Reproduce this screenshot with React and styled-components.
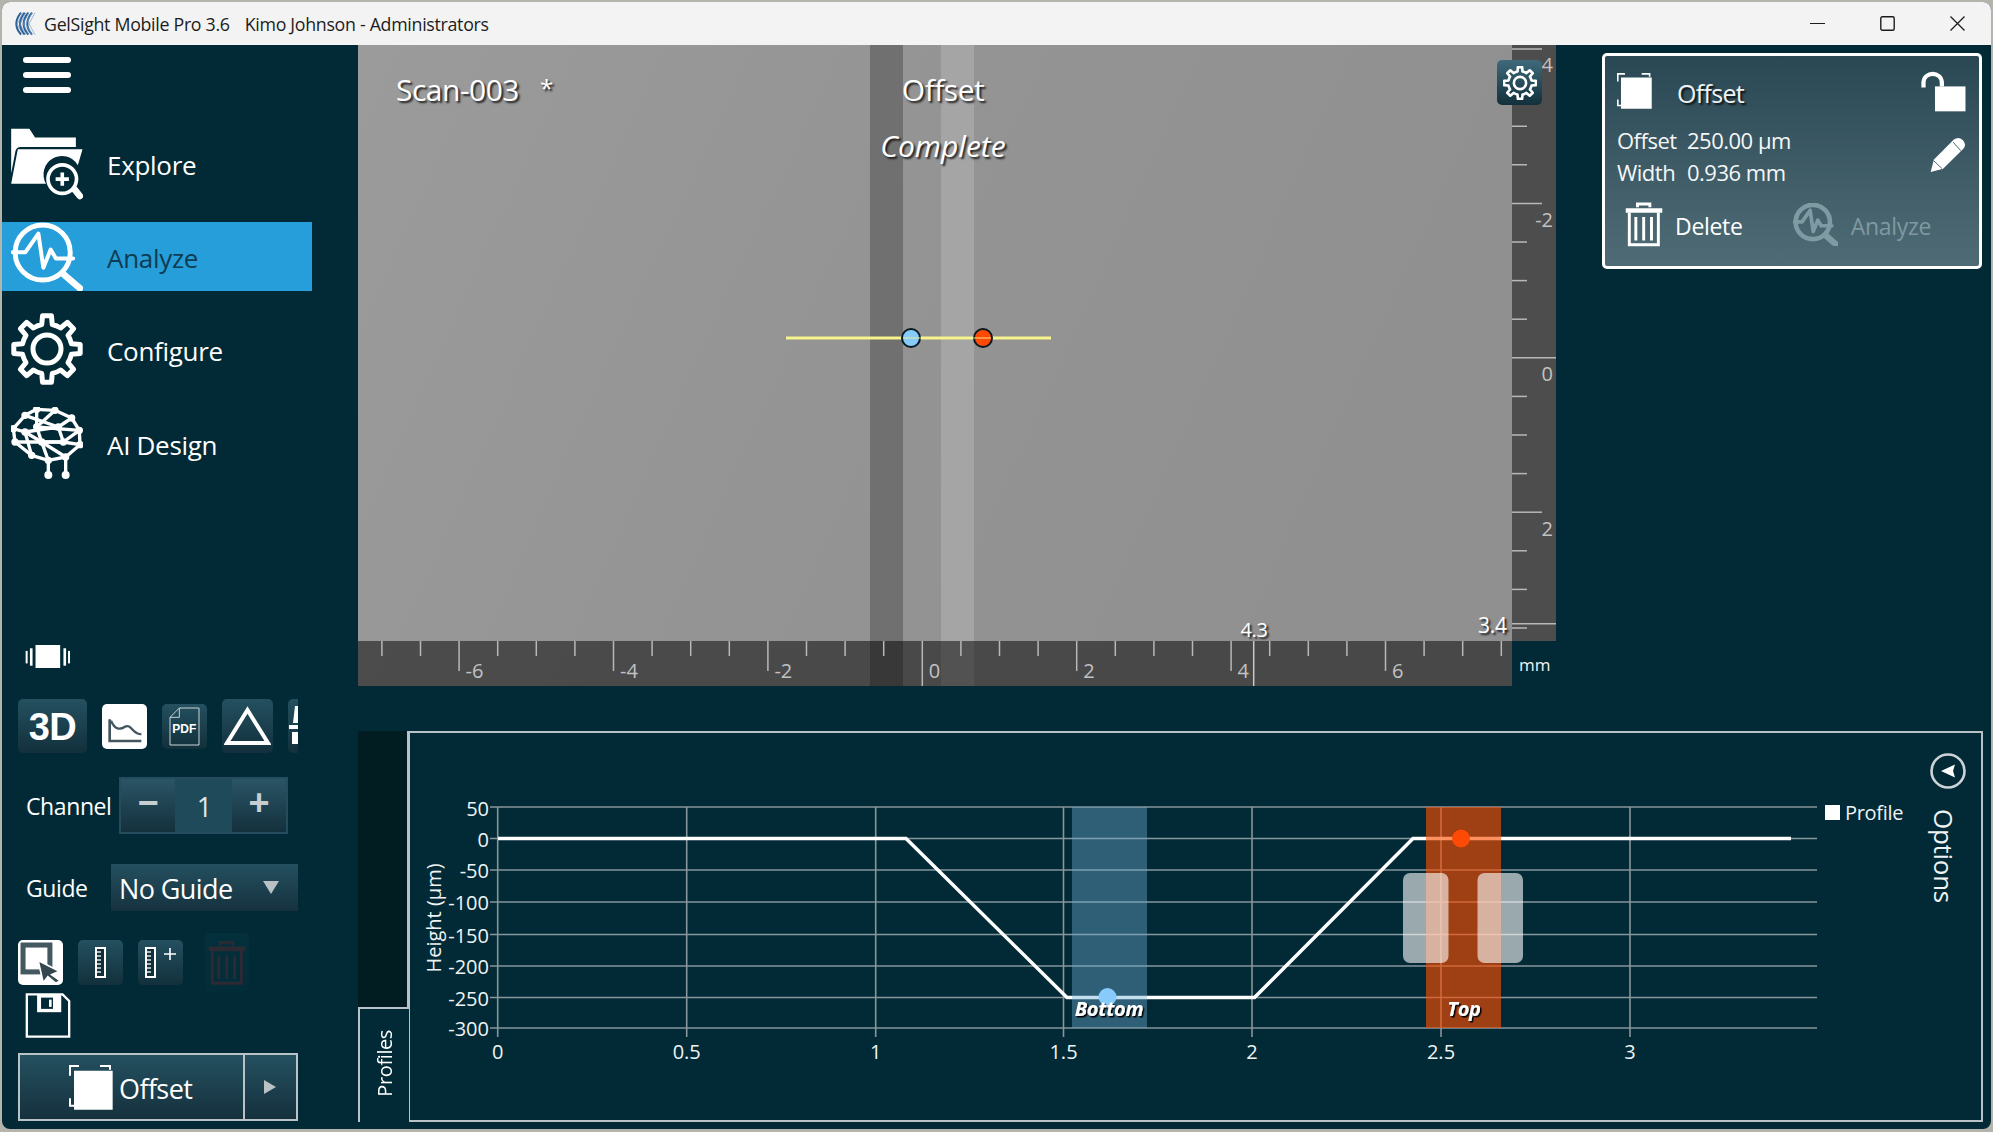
import React from 'react';
import styled, { createGlobalStyle } from 'styled-components';

const FONT = '"Open Sans", "Noto Sans", "Liberation Sans", sans-serif';
const BG = '#022a36';
const LINE = '#b9c3c7';

const Global = createGlobalStyle`
  html, body { margin: 0; padding: 0; width: 1993px; height: 1132px; overflow: hidden; background: #b4b4ac; }
  body { font-family: ${FONT}; }
  * { box-sizing: border-box; }
`;

const Win = styled.div`
  margin: 2px 2px 0 2px; width: 1989px; height: 1127px; background: ${BG};
  border-radius: 8px; overflow: hidden; display: flex; flex-direction: column;
`;
const TitleBar = styled.header`
  height: 43px; flex: none; background: #f3f3f3; display: flex; align-items: center;
  padding-left: 11px; color: #1c1c1c; font-size: 17.8px; letter-spacing: -0.3px;
  svg { flex: none; }
`;
const TitleText = styled.span`margin-left: ${p => p.$ml}px; white-space: nowrap;`;
const WinButtons = styled.div`margin-left: auto; display: flex; align-items: center; padding-right: 26px; gap: 55px;`;
const Body = styled.div`flex: 1; display: flex; min-height: 0;`;

/* sidebar */
const Sidebar = styled.aside`width: 356px; flex: none; display: flex; flex-direction: column; padding-top: 12px;`;
const Burger = styled.div`
  margin-left: 21px; width: 48px; height: 36px; display: flex; flex-direction: column; justify-content: space-between;
  span { display: block; height: 6px; border-radius: 3px; background: #fff; }
`;
const Nav = styled.nav`margin-top: 34px; display: flex; flex-direction: column; gap: 22px;`;
const NavLabel = styled.span`padding-top: 3px;`;
const NavItem = styled.div`
  width: 310px; height: ${p => p.$h}px; display: flex; align-items: center; padding-left: 9px; gap: 24px;
  background: ${p => (p.$active ? '#269ed9' : 'transparent')};
  color: ${p => (p.$active ? '#0f3c52' : '#fff')};
  font-size: 26px; letter-spacing: -0.3px;
  svg { flex: none; }
`;
const Lower = styled.div`margin-top: 166px; padding-left: 16px; display: flex; flex-direction: column;`;
const Vibrate = styled.div`margin-left: 7px; height: 23px; display: flex;`;
const Toolbar = styled.div`margin-top: 31px; width: 280px; height: 54px; overflow: hidden; display: flex; align-items: center; gap: 15px;`;
const IconButton = styled.div`
  flex: none; width: ${p => p.$w || 45}px; height: ${p => p.$hh || 45}px; border-radius: 5px;
  margin-left: ${p => p.$ml || 0}px;
  display: flex; align-items: center; justify-content: ${p => (p.$start ? 'flex-start' : 'center')};
  background: ${p => p.$flat ? 'linear-gradient(#03303c,#022c38)' : p.$white ? '#fff' : 'linear-gradient(#24505f,#12303c)'};
  svg { display: block; }
`;
const ThreeD = styled.span`color: #fff; font: 700 38px "Liberation Sans", sans-serif; letter-spacing: -0.5px; padding-top: 2px;`;
const FieldRow = styled.div`margin-top: ${p => p.$mt}px; display: flex; align-items: center; height: ${p => p.$h}px;`;
const FieldLabel = styled.label`width: ${p => p.$w}px; margin-left: 8px; padding-top: 3px; color: #fff; font-size: 23px; letter-spacing: -0.4px; flex: none;`;
const Stepper = styled.div`margin-top: 1px; width: 169px; height: 57px; border: 2px solid #244c5c; display: flex; background: #1f4a5a;`;
const StepBtn = styled.div`
  width: 54px; background: linear-gradient(#2a5565,#14303d); color: #c6ced1; font: 700 36px "Liberation Sans", sans-serif;
  display: flex; align-items: center; justify-content: center; padding-bottom: 4px;
`;
const StepValue = styled.div`flex: 1; color: #dfe6e8; font-size: 27px; display: flex; align-items: center; justify-content: center; padding: 2px 0 0 2px;`;
const Select = styled.div`
  width: 187px; height: 47px; margin-top: 1px; background: linear-gradient(#24505f,#16323f); color: #fff; font-size: 27px; letter-spacing: -0.6px;
  display: flex; align-items: center; padding-left: 8px;
`;
const SelectText = styled.span`padding-top: 2px;`;
const Caret = styled.i`
  margin-left: auto; margin-right: 19px; margin-top: 1px; width: 0; height: 0;
  border-left: 8px solid transparent; border-right: 8px solid transparent; border-top: 13px solid #b9c1c5;
`;
const ToolRow = styled.div`margin-top: 23px; height: 59px; display: flex; align-items: center; gap: 15px;`;
const Save = styled.div`margin: 1px 0 0 7px; height: 45px;`;
const OffsetButton = styled.div`
  margin-top: 15px; width: 280px; height: 68px; border: 2px solid ${LINE}; display: flex;
  background: linear-gradient(#24505f,#15303d); color: #fff; font-size: 27px; letter-spacing: -0.6px;
`;
const OffsetMain = styled.div`width: 225px; display: flex; align-items: center; padding-left: 49px; gap: 6px; border-right: 2px solid ${LINE};`;
const OffsetPlay = styled.div`flex: 1; display: flex; align-items: center; justify-content: center; padding-right: 2px;`;
const Play = styled.i`width: 0; height: 0; border-top: 7px solid transparent; border-bottom: 7px solid transparent; border-left: 12px solid #b9c1c5;`;

/* main */
const Main = styled.main`flex: 1; display: flex; flex-direction: column; min-width: 0;`;
const TopRow = styled.div`display: flex; height: 641px; flex: none;`;
const Stage = styled.section`position: relative; width: 1198px; height: 641px; flex: none; svg { display: block; }`;
const Over = styled.div`
  position: absolute; left: ${p => p.$x}px; top: ${p => p.$y}px; color: #fff; line-height: 1; white-space: nowrap;
  font-size: ${p => p.$s || 30}px; letter-spacing: ${p => p.$ls ?? -0.5}px; font-style: ${p => (p.$it ? 'italic' : 'normal')};
  text-shadow: 2px 2px 2px rgba(0,0,0,.8); transform: ${p => (p.$c ? 'translateX(-50%)' : 'none')};
`;
const GearBtn = styled.div`
  position: absolute; left: 1139px; top: 15px; width: 45px; height: 45px; border-radius: 5px;
  background: linear-gradient(#3f6a7c,#12303c); display: flex; align-items: center; justify-content: center;
`;
const Panel = styled.section`
  margin: 8px 0 0 46px; width: 380px; height: 216px; border: 3px solid #fff; border-radius: 5px;
  background: linear-gradient(#2a4854,#4f6c76); padding: 15px 13px 0 12px; color: #fff; display: flex; flex-direction: column;
`;
const PanelHead = styled.div`display: flex; align-items: center; height: 40px;`;
const PanelTitle = styled.span`margin-left: 25px; padding-top: 4px; font-size: 25px; letter-spacing: -0.7px; text-shadow: 2px 2px 2px rgba(0,0,0,.8); color: #eef2f3;`;
const PanelMid = styled.div`margin-top: 11px; display: flex; align-items: center; justify-content: space-between; height: 66px;`;
const Rows = styled.div`display: grid; grid-template-columns: 70px auto; font-size: 22px; line-height: 32px; letter-spacing: -0.5px; padding: 2px 0 0 1px; margin-left: -1px; color: #f4f7f7;`;
const Actions = styled.div`margin-top: 14px; display: flex; align-items: center; padding-left: 8px; height: 45px;`;
const Action = styled.span`padding-top: 2px; font-size: 23px; letter-spacing: -0.3px; font-weight: ${p => (p.$dim ? 400 : 500)}; color: ${p => (p.$dim ? '#7f99a1' : '#fff')}; margin-left: ${p => p.$ml}px;`;
const ActionIcon = styled.span`display: flex; margin-left: ${p => p.$ml}px;`;
const Push = styled.div`margin-left: auto; display: flex;`;

const ChartRow = styled.div`margin-top: 45px; height: 391px; display: flex; flex: none;`;
const Tabs = styled.div`width: 51px; flex: none; display: flex; flex-direction: column;`;
const TabSpace = styled.div`flex: 1; background: #011d22; border-right: 2px solid ${LINE};`;
const ProfilesTab = styled.div`
  height: 115px; border-left: 2px solid ${LINE}; border-top: 2px solid ${LINE}; color: #fff;
  display: flex; align-items: center; justify-content: center;
  span { writing-mode: vertical-rl; transform: rotate(180deg); font-size: 20px; letter-spacing: -0.4px; margin-bottom: 4px; }
`;
const ChartFrame = styled.div`
  width: 1574px; height: 391px; border: 2px solid ${LINE}; border-left-width: 1px; flex: none;
  svg { display: block; }
  text { font-family: ${FONT}; }
`;

/* icons */
const gear = (cx, cy, R, r, n) => {
  const w = (2 * Math.PI) / n;
  let d = '';
  for (let i = 0; i < n; i++) {
    const a = i * w - Math.PI / 2;
    const pts = [[r, a - w * 0.27], [R, a - w * 0.17], [R, a + w * 0.17], [r, a + w * 0.27]];
    pts.forEach(([q, t], k) => {
      const x = (cx + q * Math.cos(t)).toFixed(2);
      const y = (cy + q * Math.sin(t)).toFixed(2);
      d += i === 0 && k === 0 ? `M${x} ${y}` : k === 0 ? `A${r} ${r} 0 0 1 ${x} ${y}` : `L${x} ${y}`;
    });
  }
  return d + `A${r} ${r} 0 0 1 ${(cx + r * Math.cos(-Math.PI / 2 - w * 0.27)).toFixed(2)} ${(cy + r * Math.sin(-Math.PI / 2 - w * 0.27)).toFixed(2)}Z`;
};

const Logo = () => (
  <svg width="24" height="24" viewBox="40 30 72 72" fill="none">
    {[0, 1, 2, 3].map(i => <path key={i} d={`M${64 + i * 11} 32 Q${36 + i * 11} 66 ${64 + i * 11} 98`} stroke="#2f6296" strokeWidth="6" />)}
    {[0, 1, 2, 3, 4].map(i => <path key={'b' + i} d={`M${70 + i * 9} 32 L${52 + i * 9} 66 L${70 + i * 9} 98`} stroke="#6f9cc4" strokeWidth="2" />)}
  </svg>
);
const ExploreIcon = () => (
  <svg width="72" height="73" viewBox="33 380 216 220">
    <path fill="#fff" d="M33 385H88L105 412H228V440H62Q49 440 46 452L33 520Z" />
    <path fill="#fff" d="M53 447H248L234 495A55 55 0 0 0 138 551H33Z" />
    <circle cx="187" cy="537" r="43" fill={BG} stroke="#fff" strokeWidth="11" />
    <path d="M187 517V557M167 537H207" stroke="#fff" strokeWidth="11" />
    <path d="M224 568L240 588" stroke="#fff" strokeWidth="20" strokeLinecap="round" />
  </svg>
);
const AnalyzeIcon = ({ c = '#fff', size = 72, h = 69, k = 1 }) => (
  <svg width={size} height={h} viewBox="33 665 216 208" fill="none" stroke={c} strokeLinecap="round" strokeLinejoin="round">
    <circle cx="128" cy="757" r="83" strokeWidth={15 * k} />
    <path d="M38 756H76L115 700L130 803L152 748L168 775H220" strokeWidth={12 * k} />
    <path d="M190 822L240 865" strokeWidth={20 * k} />
  </svg>
);
const ConfigureIcon = () => (
  <svg width="72" height="72" viewBox="0 0 72 72" fill="none" stroke="#fff" strokeWidth="5" strokeLinejoin="round">
    <path d={gear(36, 36, 33.5, 25, 8)} />
    <circle cx="36" cy="36" r="14" />
  </svg>
);
const N = [[75,1250],[110,1232],[165,1235],[215,1258],[238,1295],[240,1338],[197,1375],[145,1385],[95,1370],[45,1330],[40,1290],[110,1285],[175,1285],[125,1330],[190,1330],[75,1300]];
const E = [[0,1],[1,2],[2,3],[3,4],[4,5],[5,6],[6,7],[7,8],[8,9],[9,10],[10,0],[1,11],[11,13],[13,7],[0,12],[2,11],[12,14],[3,12],[14,5],[4,14],[15,10],[15,12],[15,13],[13,14],[9,14],[11,4],[15,8],[13,6]];
const AiIcon = () => (
  <svg width="72" height="72" viewBox="33 1225 216 216" stroke="#fff" strokeWidth="10" fill="#fff">
    {E.map(([a, b], i) => <line key={i} x1={N[a][0]} y1={N[a][1]} x2={N[b][0]} y2={N[b][1]} />)}
    {N.map(([x, y], i) => <circle key={i} cx={x} cy={y} r="6" />)}
    <path d="M145 1385V1428M197 1375V1428" />
    <circle cx="145" cy="1429" r="7" /><circle cx="197" cy="1429" r="7" />
  </svg>
);
const SquareBrackets = ({ w, h }) => (
  <svg width={w} height={h} viewBox="207 1308 132 135" fill="none">
    <path fill="#fff" d="M222 1325H338V1442H222Z" />
    <path stroke="#fff" strokeWidth="6" d="M237 1311H210V1340M300 1311H330V1322M210 1408V1430H222" />
  </svg>
);
const Trash = ({ c = '#fff', w = 38, h = 45 }) => (
  <svg width={w} height={h} viewBox="434 604 116 138" fill="none" stroke={c}>
    <path strokeWidth="9" d="M472 620V610H510V620" />
    <path strokeWidth="14" d="M436 630H548" />
    <path strokeWidth="9" d="M447 636V735H536V636" />
    <path strokeWidth="9" d="M467 650V722M491 650V722M515 650V722" />
  </svg>
);
const Ruler = () => (
  <g>
    <rect x="0" y="0" width="9" height="29" fill="#12303c" stroke="#fff" strokeWidth="2" />
    <path d="M1 4H5M1 8H5M1 12H5M1 16H5M1 20H5M1 24H5" stroke="#dfe6e8" strokeWidth="1.5" />
  </g>
);

const hLines = [807, 838.5, 870, 902, 934.5, 966, 997.5, 1028];
const hLabels = ['50', '0', '-50', '-100', '-150', '-200', '-250', '-300'];
const vLines = [[497.7,'0'],[686.7,'0.5'],[875.7,'1'],[1063.5,'1.5'],[1252,'2'],[1441,'2.5'],[1630,'3']];

const bottomTicks = Array.from({ length: 30 }, (_, i) => i - 14);
const sideTicks = Array.from({ length: 16 }, (_, i) => i - 8);

const StageArt = () => (
  <svg width="1198" height="641" viewBox="358 45 1198 641">
    <defs>
      <linearGradient id="img" x1="0" y1="0" x2="1" y2="0.25">
        <stop offset="0" stopColor="#9b9b9b" />
        <stop offset="0.5" stopColor="#949494" />
        <stop offset="1" stopColor="#909090" />
      </linearGradient>
    </defs>
    <rect x="358" y="45" width="1154" height="641" fill="url(#img)" />
    <rect x="870" y="45" width="33" height="641" fill="#707070" />
    <rect x="941" y="45" width="33" height="641" fill="#a5a5a5" />
    <rect x="358" y="641" width="1154" height="45" fill="#000" opacity=".5" />
    <rect x="1512" y="45" width="44" height="596" fill="#4d4d4d" />
    {bottomTicks.map(k => {
      const x = 922.3 + k * 38.6;
      const major = k % 4 === 0;
      return <line key={k} x1={x} x2={x} y1="641" y2={k === 0 ? 686 : major ? 671 : 656} stroke="#b8b8b8" strokeWidth="1.5" />;
    })}
    {[-6, -4, -2, 0, 2, 4, 6].map(v => (
      <text key={v} x={922.3 + v * 77.2 + 6.5} y="678" fontFamily={FONT} fontSize="20" fill="#c2c2c2">{v}</text>
    ))}
    {sideTicks.map(k => {
      const y = 357.8 + k * 38.6;
      const major = k % 4 === 0;
      return <line key={k} y1={y} y2={y} x1="1512" x2={k === 0 ? 1556 : major ? 1542 : 1527} stroke="#b8b8b8" strokeWidth="1.5" />;
    })}
    <line x1="1512" x2="1556" y1="623.8" y2="623.8" stroke="#b8b8b8" strokeWidth="1.5" />
    <line x1="1253.7" x2="1253.7" y1="641" y2="686" stroke="#c8c8c8" strokeWidth="1.5" />
    {[[-4, 72], [-2, 227], [0, 381], [2, 536]].map(([v, y]) => (
      <text key={v} x="1553" y={y} textAnchor="end" fontFamily={FONT} fontSize="20" fill="#c2c2c2">{v}</text>
    ))}
    <text x="1519" y="671" fontFamily={FONT} fontSize="17" fill="#f0f4f5">mm</text>
    <line x1="786" x2="1051" y1="338" y2="338" stroke="#f6f48c" strokeWidth="3" />
    <circle cx="911" cy="338" r="9" fill="#87cbfb" stroke="#0b1a22" strokeWidth="2" />
    <circle cx="983" cy="338" r="9" fill="#ff4a05" stroke="#0b1a22" strokeWidth="2" />
    <line x1="903" x2="991" y1="338" y2="338" stroke="#f6f48c" strokeWidth="1.4" opacity=".6" />
  </svg>
);

const ChartArt = () => (
  <svg width="1571" height="387" viewBox="410 733 1571 387">
    <defs>
      <filter id="sh" x="-20%" y="-20%" width="140%" height="150%">
        <feDropShadow dx="1.5" dy="1.5" stdDeviation="0.6" floodColor="#000" floodOpacity="1" />
      </filter>
    </defs>
    {hLines.map(y => <line key={y} x1="490" x2="1817" y1={y} y2={y} stroke="#87969a" strokeWidth="1.6" />)}
    {vLines.map(([x]) => <line key={x} x1={x} x2={x} y1="807" y2="1037" stroke="#87969a" strokeWidth="1.6" />)}
    {hLabels.map((t, i) => <text key={t} x="489" y={hLines[i] + (i === 0 ? 9 : 8)} textAnchor="end" fontSize="20" fill="#eef3f4">{t}</text>)}
    {vLines.map(([x, t]) => <text key={t} x={x} y="1059" textAnchor="middle" fontSize="20" fill="#eef3f4">{t}</text>)}
    <text transform="translate(441 918) rotate(-90)" textAnchor="middle" fontSize="20" fill="#eef3f4">Height (μm)</text>
    <path d="M498 838.5H906L1067 997.5H1254.5L1413 838.5H1791" fill="none" stroke="#fff" strokeWidth="3.5" />
    <rect x="1072" y="807" width="75" height="221" fill="#70afd6" opacity=".4" />
    <rect x="1426" y="807" width="75" height="221" fill="#ff4e00" opacity=".62" />
    <circle cx="1107.5" cy="997" r="9" fill="#87cbfb" />
    <circle cx="1461" cy="838.5" r="9" fill="#ff4a05" />
    <rect x="1403" y="873" width="45.5" height="90" rx="7" fill="#fff" opacity=".6" />
    <rect x="1477.5" y="873" width="45.5" height="90" rx="7" fill="#fff" opacity=".6" />
    <text x="1109" y="1016" textAnchor="middle" fontSize="20" fontWeight="700" fontStyle="italic" fill="#fff" letterSpacing="-0.3" filter="url(#sh)">Bottom</text>
    <text x="1464" y="1016" textAnchor="middle" fontSize="20" fontWeight="700" fontStyle="italic" fill="#fff" letterSpacing="-0.3" filter="url(#sh)">Top</text>
    <rect x="1825" y="805" width="15" height="15" fill="#fff" />
    <text x="1845" y="820" fontSize="20" letterSpacing="-0.3" fill="#eef3f4">Profile</text>
    <circle cx="1948" cy="771" r="16.5" fill="none" stroke="#ccd4d7" strokeWidth="2.6" />
    <path d="M1941 771L1955 764.5L1953 771L1955 777.5Z" fill="#fff" />
    <text transform="translate(1934 856) rotate(90)" textAnchor="middle" fontSize="26" letterSpacing="-0.3" fill="#eef3f4">Options</text>
  </svg>
);

export default function App() {
  return (
    <>
      <Global />
      <Win>
        <TitleBar>
          <Logo />
          <TitleText $ml={7}>GelSight Mobile Pro 3.6</TitleText>
          <TitleText $ml={15}>Kimo Johnson - Administrators</TitleText>
          <WinButtons>
            <svg width="15" height="15" viewBox="0 0 15 15"><path d="M0 7.5H15" stroke="#1c1c1c" strokeWidth="1.2" /></svg>
            <svg width="15" height="15" viewBox="0 0 15 15"><rect x="0.8" y="0.8" width="13.4" height="13.4" rx="1.5" fill="none" stroke="#1c1c1c" strokeWidth="1.4" /></svg>
            <svg width="15" height="15" viewBox="0 0 15 15"><path d="M0.5 0.5L14.5 14.5M14.5 0.5L0.5 14.5" stroke="#1c1c1c" strokeWidth="1.3" /></svg>
          </WinButtons>
        </TitleBar>
        <Body>
          <Sidebar>
            <Burger><span /><span /><span /></Burger>
            <Nav>
              <NavItem $h={73}><ExploreIcon /><NavLabel>Explore</NavLabel></NavItem>
              <NavItem $h={69} $active><AnalyzeIcon /><NavLabel>Analyze</NavLabel></NavItem>
              <NavItem $h={72}><ConfigureIcon /><NavLabel>Configure</NavLabel></NavItem>
              <NavItem $h={72}><AiIcon /><NavLabel>AI Design</NavLabel></NavItem>
            </Nav>
            <Lower>
              <Vibrate>
                <svg width="46" height="23" viewBox="75 47 136 70" fill="#fff">
                  <rect x="105" y="47" width="75" height="70" />
                  <rect x="75" y="65" width="6" height="38" /><rect x="88" y="57" width="8" height="53" />
                  <rect x="190" y="57" width="8" height="53" /><rect x="204" y="65" width="6" height="38" />
                </svg>
              </Vibrate>
              <Toolbar>
                <IconButton $w={69} $hh={54}><ThreeD>3D</ThreeD></IconButton>
                <IconButton $white>
                  <svg width="45" height="45" viewBox="306 222 135 135" fill="none" stroke="#44565d">
                    <path strokeWidth="8" d="M329 268V333H424" />
                    <path strokeWidth="7" d="M333 272C345 300 360 300 375 290C395 280 398 316 424 312" />
                  </svg>
                </IconButton>
                <IconButton>
                  <svg width="45" height="45" viewBox="486 222 135 135" fill="none">
                    <path stroke="#c9d3d6" strokeWidth="3" d="M538 234H597V345H510V262ZM538 234V262H510" />
                    <text x="553" y="310" textAnchor="middle" fontFamily="Liberation Sans" fontWeight="700" fontSize="36" fill="#fff">PDF</text>
                  </svg>
                </IconButton>
                <IconButton $w={51} $hh={54}>
                  <svg width="47" height="40" viewBox="0 0 47 40" fill="none"><path d="M23.5 4L44 37H3Z" stroke="#fff" strokeWidth="4" /></svg>
                </IconButton>
                <IconButton $w={51} $hh={54} $start>
                  <svg width="10" height="40" viewBox="0 0 10 40" fill="#fff"><path d="M7 0H10V17H5ZM1 19H10V23H1ZM4 26H10V38H4Z" /></svg>
                </IconButton>
              </Toolbar>
              <FieldRow $mt={23} $h={57}>
                <FieldLabel $w={93}>Channel</FieldLabel>
                <Stepper><StepBtn>−</StepBtn><StepValue>1</StepValue><StepBtn>+</StepBtn></Stepper>
              </FieldRow>
              <FieldRow $mt={30} $h={47}>
                <FieldLabel $w={85}>Guide</FieldLabel>
                <Select><SelectText>No Guide</SelectText><Caret /></Select>
              </FieldRow>
              <ToolRow>
                <IconButton $white>
                  <svg width="45" height="45" viewBox="55 937 134 134" fill="none">
                    <rect x="70" y="952" width="80" height="80" stroke="#43585f" strokeWidth="15" />
                    <path d="M115 998L178 1030L155 1040L180 1058L168 1066L144 1046L130 1064Z" fill="#34474f" stroke="#fff" strokeWidth="5" />
                  </svg>
                </IconButton>
                <IconButton><svg width="45" height="45" viewBox="-18 -8 45 45"><Ruler /></svg></IconButton>
                <IconButton>
                  <svg width="45" height="45" viewBox="-8 -8 45 45"><Ruler /><path d="M18 6H30M24 0V12" stroke="#fff" strokeWidth="1.6" /></svg>
                </IconButton>
                <IconButton $flat $w={44} $hh={59} $ml={7}><Trash c="#2c2a32" w={38} h={46} /></IconButton>
              </ToolRow>
              <Save>
                <svg width="46" height="45" viewBox="75 1092 136 136" fill="none">
                  <path d="M79 1096H187L207 1116V1224H79Z" stroke="#fff" strokeWidth="7" />
                  <path d="M110 1096H183V1150H110Z" fill="#fff" />
                  <rect x="122" y="1106" width="36" height="34" fill={BG} />
                  <rect x="146" y="1112" width="8" height="22" fill="#fff" />
                </svg>
              </Save>
              <OffsetButton>
                <OffsetMain><SquareBrackets w={44} h={45} /><SelectText>Offset</SelectText></OffsetMain>
                <OffsetPlay><Play /></OffsetPlay>
              </OffsetButton>
            </Lower>
          </Sidebar>
          <Main>
            <TopRow>
              <Stage>
                <StageArt />
                <Over $x={38} $y={30}>Scan-003</Over>
                <Over $x={182} $y={31} $s={24}>*</Over>
                <Over $x={585} $y={30} $c>Offset</Over>
                <Over $x={585} $y={86} $c $it $ls={0}>Complete</Over>
                <Over $x={896} $y={575} $c $s={20} $ls={-0.3}>4.3</Over>
                <Over $x={1120} $y={570} $s={21} $ls={-0.3}>3.4</Over>
                <GearBtn>
                  <svg width="34" height="34" viewBox="0 0 72 72" fill="none" stroke="#fff" strokeWidth="5.5" strokeLinejoin="round">
                    <path d={gear(36, 36, 34, 25, 8)} /><circle cx="36" cy="36" r="13" />
                  </svg>
                </GearBtn>
              </Stage>
              <Panel>
                <PanelHead>
                  <SquareBrackets w={35} h={36} />
                  <PanelTitle>Offset</PanelTitle>
                  <Push>
                    <svg width="45" height="41" viewBox="1323 215 136 125" fill="none">
                      <path d="M1330 265V250C1332 215 1384 215 1386 250V262" stroke="#fff" strokeWidth="13" />
                      <rect x="1365" y="262" width="93" height="76" fill="#fff" />
                    </svg>
                  </Push>
                </PanelHead>
                <PanelMid>
                  <Rows>
                    <span>Offset</span><span>250.00 µm</span>
                    <span>Width</span><span>0.936 mm</span>
                  </Rows>
                  <svg width="36" height="36" viewBox="1350 434 110 110">
                    <path fill="#fff" d="M1352 541L1362 503L1423 442Q1436 431 1450 443Q1463 456 1452 470L1390 531Z" />
                    <path stroke="#4a6671" strokeWidth="3" fill="none" d="M1421 450L1444 476M1362 507L1386 530" />
                  </svg>
                </PanelMid>
                <Actions>
                  <Trash />
                  <Action $ml={12}>Delete</Action>
                  <ActionIcon $ml={50}><AnalyzeIcon c="#7f9aa2" size={45} h={43} k={1.5} /></ActionIcon>
                  <Action $dim $ml={13}>Analyze</Action>
                </Actions>
              </Panel>
            </TopRow>
            <ChartRow>
              <Tabs>
                <TabSpace />
                <ProfilesTab><span>Profiles</span></ProfilesTab>
              </Tabs>
              <ChartFrame><ChartArt /></ChartFrame>
            </ChartRow>
          </Main>
        </Body>
      </Win>
    </>
  );
}
